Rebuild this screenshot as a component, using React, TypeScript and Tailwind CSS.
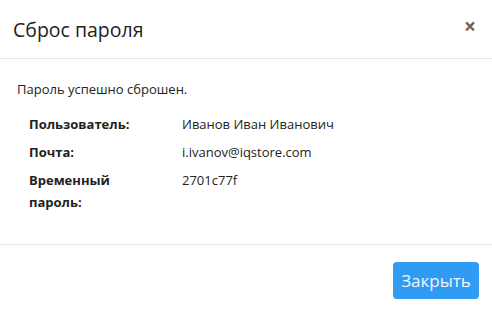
export default function App() {
  const rows = [
    { label: 'Пользователь:', value: 'Иванов Иван Иванович' },
    { label: 'Почта:', value: 'i.ivanov@iqstore.com' },
    { label: 'Временный пароль:', value: '2701c77f' },
  ];

  return (
    <div className="w-[492px] h-[312px] bg-white text-[#222] font-['Open_Sans',sans-serif] flex flex-col">
      {/* Шапка */}
      <div className="h-[59px] border-b border-[#e5e5e5] flex items-center justify-between pl-[13px] pr-[16px]">
        <h4 className="text-[19.5px] leading-none text-[#222] pt-[2px]">Сброс пароля</h4>
        <button className="text-[#666] text-[21px] leading-none font-bold -mt-[6px]">×</button>
      </div>

      {/* Тело */}
      <div className="h-[186px] border-b border-[#e5e5e5] pl-[17px] pt-[19px] text-[13px]">
        <p className="leading-[22px] mb-[13px]">Пароль успешно сброшен.</p>
        <div className="pl-[12px] flex flex-col gap-[6px]">
          {rows.map((row) => (
            <div key={row.label} className="flex leading-[22px]">
              <div className="w-[153px] font-bold pr-[40px]">{row.label}</div>
              <div>{row.value}</div>
            </div>
          ))}
        </div>
      </div>

      {/* Подвал */}
      <div className="flex justify-end pr-[13px] pt-[17px]">
        <button className="w-[86px] h-[37px] rounded-[4px] bg-[#2f9bf3] text-[#eef6ff] text-[17px]">
          Закрыть
        </button>
      </div>
    </div>
  );
}
